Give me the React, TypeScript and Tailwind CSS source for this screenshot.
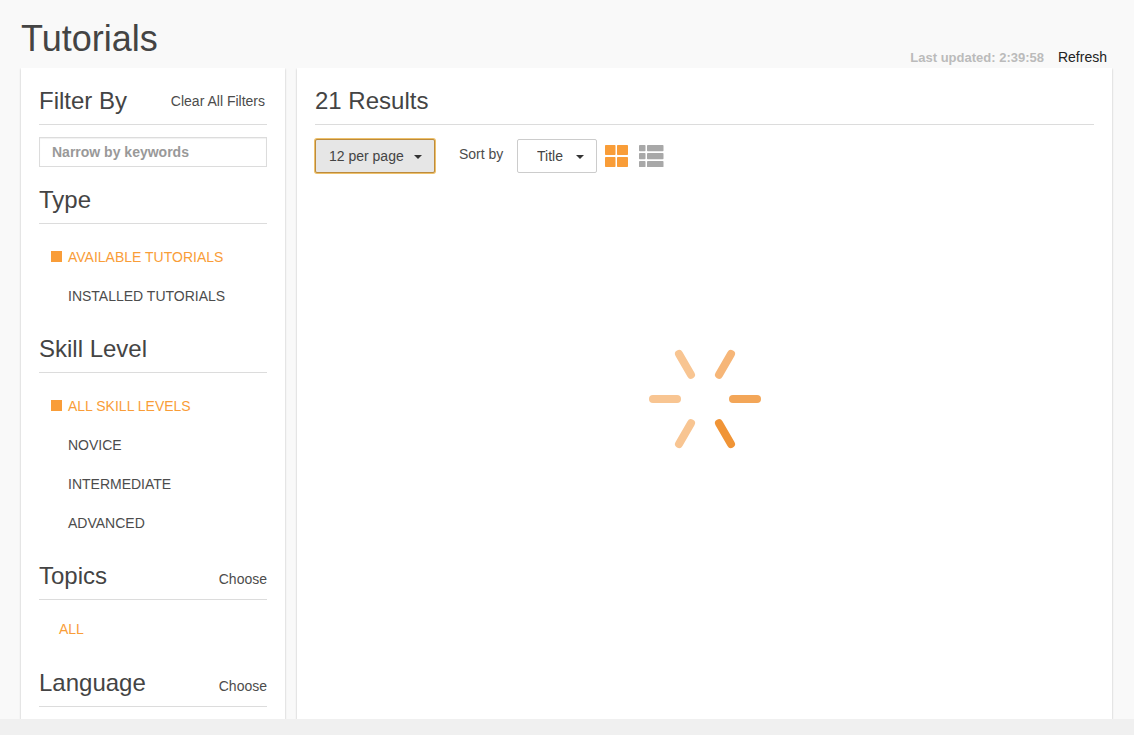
import { useState, type ReactNode } from "react";

function SectionHeader({
  title,
  align = "baseline",
  children,
}: {
  title: string;
  align?: "baseline" | "center";
  children?: ReactNode;
}) {
  return (
    <div
      className={`flex justify-between border-b border-[#dcdcdc] pb-[7px] ${
        align === "center" ? "items-center" : "items-baseline"
      }`}
    >
      <h2 className="text-2xl leading-8 text-[#444]">{title}</h2>
      {children}
    </div>
  );
}

function FilterList({
  label,
  options,
}: {
  label: string;
  options: string[];
}) {
  const [selected, setSelected] = useState(options[0]);
  return (
    <ul aria-label={label} className="mt-[13px] mb-[18px]">
      {options.map((option) => (
        <li key={option} className="flex h-[39px] items-center pl-3">
          <button
            type="button"
            aria-pressed={option === selected}
            onClick={() => setSelected(option)}
            className={`flex items-center gap-[6px] uppercase ${
              option === selected ? "text-[#f99d38]" : ""
            }`}
          >
            <span
              className={`size-[11px] ${
                option === selected ? "bg-[#f99d38]" : ""
              }`}
            />
            {option}
          </button>
        </li>
      ))}
    </ul>
  );
}

function Caret() {
  return (
    <svg
      viewBox="0 0 8 4"
      className="pointer-events-none absolute top-4 right-[13px] h-1 w-2 fill-[#333]"
      aria-hidden="true"
    >
      <path d="M0 0h8L4 4z" />
    </svg>
  );
}

function GridIcon() {
  return (
    <svg viewBox="0 0 23 22" className="h-[22px] w-[23px] fill-[#f99d38]" aria-hidden="true">
      <rect width="10.5" height="10" rx="0.7" />
      <rect x="12" width="11" height="10" rx="0.7" />
      <rect y="12" width="10.5" height="10" rx="0.7" />
      <rect x="12" y="12" width="11" height="10" rx="0.7" />
    </svg>
  );
}

function ListIcon() {
  return (
    <svg viewBox="0 0 25 22" className="h-[22px] w-[25px] fill-[#a8a8a8]" aria-hidden="true">
      {[0, 8, 16].map((y) => (
        <g key={y}>
          <rect y={y} width="6.5" height="6.2" rx="0.8" />
          <rect x="8" y={y} width="16.5" height="6.2" rx="0.8" />
        </g>
      ))}
    </svg>
  );
}

const SPOKES = [
  { angle: 0, color: "#f3a658" },
  { angle: 60, color: "#f09436" },
  { angle: 120, color: "#f8c592" },
  { angle: 180, color: "#f8c592" },
  { angle: 240, color: "#f8c592" },
  { angle: 300, color: "#f6b678" },
];

function Spinner() {
  return (
    <svg viewBox="-56 -56 112 112" className="size-28" role="img" aria-label="Loading">
      {SPOKES.map(({ angle, color }) => (
        <line
          key={angle}
          x1="28"
          x2="52"
          y1="0"
          y2="0"
          stroke={color}
          strokeWidth="8"
          strokeLinecap="round"
          transform={`rotate(${angle})`}
        />
      ))}
    </svg>
  );
}

export default function App() {
  const [view, setView] = useState("grid");
  return (
    <div className="flex min-h-screen flex-col bg-[#f9f9f9] font-['Liberation_Sans',Arial,sans-serif] text-sm text-[#4c4c4c]">
      <header className="flex items-end justify-between pt-4 pr-[27px] pl-[21px]">
        <h1 className="pb-[6px] text-4xl leading-[46px] text-[#444]">Tutorials</h1>
        <div className="flex items-baseline gap-[14px]">
          <span className="text-[13px] font-bold text-[#bbb]">
            Last updated: 2:39:58
          </span>
          <button type="button" className="text-[#222]">
            Refresh
          </button>
        </div>
      </header>

      <div className="flex grow gap-3 overflow-hidden pr-[22px] pl-[21px]">
        <aside className="w-[264px] shrink-0 bg-white px-[18px] pt-[17px] pb-3 shadow-[0_1px_2px_rgba(0,0,0,0.25)]">
          <SectionHeader title="Filter By" align="center">
            <button type="button" className="pr-[2px]">
              Clear All Filters
            </button>
          </SectionHeader>
          <input
            type="text"
            aria-label="Narrow by keywords"
            placeholder="Narrow by keywords"
            className="mt-3 mb-[17px] block h-[30px] w-full border border-[#dcdcdc] px-3 shadow-[inset_0_1px_1px_rgba(0,0,0,0.06)] placeholder:font-bold placeholder:text-[#999]"
          />
          <SectionHeader title="Type" />
          <FilterList
            label="Type"
            options={["Available Tutorials", "Installed Tutorials"]}
          />
          <SectionHeader title="Skill Level" />
          <FilterList
            label="Skill Level"
            options={["All Skill Levels", "Novice", "Intermediate", "Advanced"]}
          />
          <SectionHeader title="Topics">
            <button type="button">Choose</button>
          </SectionHeader>
          <p className="mt-[10px] mb-[18px] pl-5 leading-[39px] text-[#f99d38]">ALL</p>
          <SectionHeader title="Language">
            <button type="button">Choose</button>
          </SectionHeader>
        </aside>

        <main className="min-w-0 grow bg-white px-[18px] pt-[17px] shadow-[0_1px_2px_rgba(0,0,0,0.25)]">
          <SectionHeader title="21 Results" />
          <div className="mt-[14px] flex items-center">
            <div className="relative">
              <select
                aria-label="Results per page"
                className="h-[34px] w-[120px] appearance-none rounded-[2px] border border-[#bd8b3c] bg-[#e6e6e6] pl-[13px] text-[#444] shadow-[0_0_0_1px_#edc06a] outline-none"
              >
                <option>12 per page</option>
                <option>24 per page</option>
                <option>48 per page</option>
              </select>
              <Caret />
            </div>
            <label htmlFor="sort" className="ml-6 w-[58px] pb-1">
              Sort by
            </label>
            <div className="relative">
              <select
                id="sort"
                className="h-[34px] w-20 appearance-none rounded-[2px] border border-[#ccc] bg-white pl-[19px] text-[#444]"
              >
                <option>Title</option>
                <option>Date</option>
              </select>
              <Caret />
            </div>
            <div className="ml-2 flex gap-[11px]">
              <button
                type="button"
                aria-label="Grid view"
                aria-pressed={view === "grid"}
                onClick={() => setView("grid")}
              >
                <GridIcon />
              </button>
              <button
                type="button"
                aria-label="List view"
                aria-pressed={view === "list"}
                onClick={() => setView("list")}
              >
                <ListIcon />
              </button>
            </div>
          </div>
          <div className="flex justify-center pt-[170px] pb-16">
            <Spinner />
          </div>
        </main>
      </div>

      <footer className="z-10 h-4 bg-[#f0f0f0]" />
    </div>
  );
}
